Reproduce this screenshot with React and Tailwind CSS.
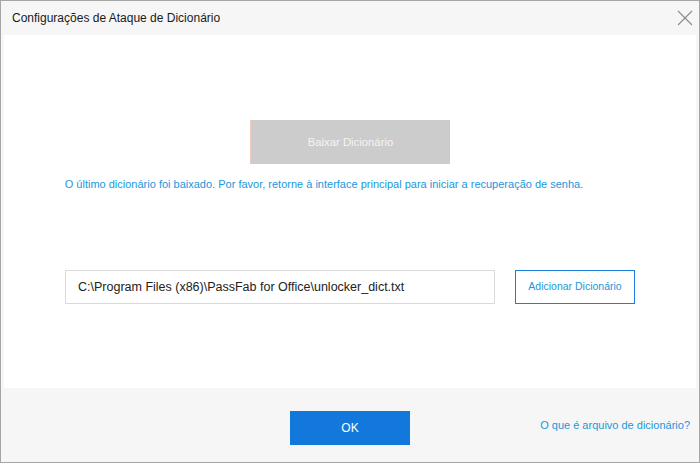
export default function App() {
  return (
    <div
      className="w-[700px] h-[463px] border border-[#a6a6a6] bg-[#f6f6f6] flex flex-col"
      style={{ fontFamily: '"Liberation Sans", Arial, sans-serif' }}
    >
      {/* title bar */}
      <div className="h-[34px] flex items-center justify-between pl-[11px] pr-[6px]">
        <span className="text-[12px] text-[#1a1a1a]">Configurações de Ataque de Dicionário</span>
        <svg width="16" height="16" viewBox="0 0 16 16" className="mb-[1px]">
          <path d="M1 1 L15 15 M15 1 L1 15" stroke="#8a8a8a" strokeWidth="1.1" fill="none" />
        </svg>
      </div>

      {/* content */}
      <div className="ml-[3px] mr-[3px] h-[353px] bg-white flex flex-col items-center">
        <button className="mt-[85px] w-[200px] h-[44px] bg-[#cccccc] border-l border-[#f2c9bd] text-[11.3px] text-[#f4f4f4]">
          Baixar Dicionário
        </button>
        <p className="mt-[12px] ml-[-52px] text-[11px] text-[#1b97dc] leading-[16px]">
          O último dicionário foi baixado. Por favor, retorne à interface principal para iniciar a recuperação de senha.
        </p>
        <div className="mt-[78px] flex items-center gap-[20px]">
          <div className="w-[430px] h-[34px] border border-[#dadada] flex items-center px-[12px] text-[12.5px] text-[#222]">
            C:\Program Files (x86)\PassFab for Office\unlocker_dict.txt
          </div>
          <button className="w-[120px] h-[34px] border border-[#1b7ddc] text-[10.5px] text-[#1b97dc]">
            Adicionar Dicionário
          </button>
        </div>
      </div>

      {/* footer */}
      <div className="flex-1 relative flex items-center justify-center">
        <button className="mt-[6px] w-[120px] h-[34px] bg-[#1378dc] text-white text-[12px]">OK</button>
        <a className="absolute right-[9px] top-[29px] text-[11px] text-[#1b97dc]">O que é arquivo de dicionário?</a>
      </div>
    </div>
  );
}
